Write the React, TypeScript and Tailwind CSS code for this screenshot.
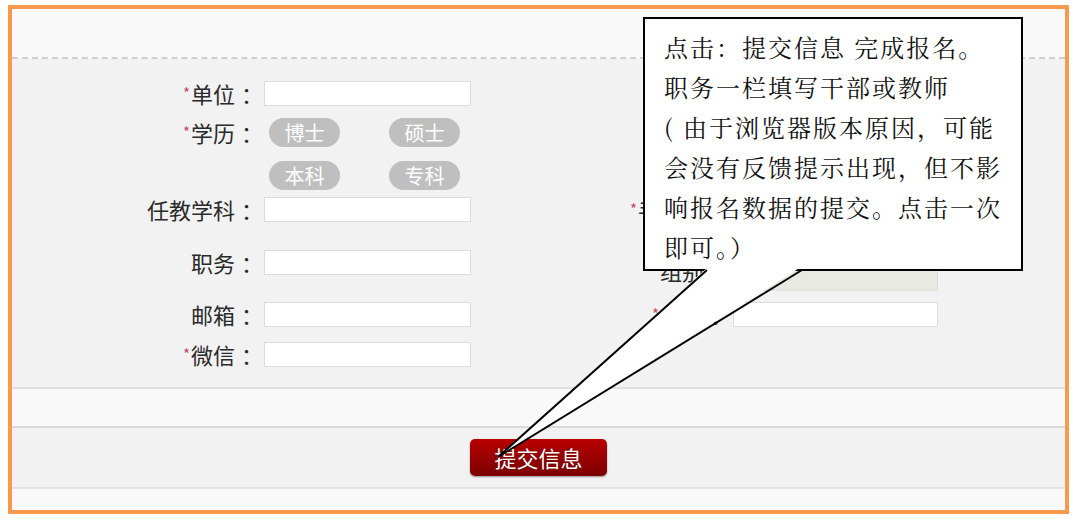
const font = { fontFamily: '"Microsoft YaHei", "Noto Sans CJK SC", sans-serif' };

type Row = {
  label?: string;
  required?: boolean;
  kind: "input" | "pills" | "gray" | "none";
  pills?: string[];
};

const Label = ({ label, required, width }: { label?: string; required?: boolean; width: string }) => (
  <div className={`${width} h-[25px] shrink-0 flex items-center justify-end text-[22px] leading-[25px] text-[#2a2a2a] whitespace-nowrap`}>
    {label && (
      <>
        {required && <span className="self-start mt-[4px] mr-[1px] text-[15px] leading-[15px] text-[#c24a6a]">*</span>}
        <span>{label}</span>
        <span className="ml-[6px] mr-[-7px]">：</span>
      </>
    )}
  </div>
);

const Field = ({ row, width }: { row: Row; width: string }) => {
  if (row.kind === "input") {
    return <div className={`${width} h-[25px] shrink-0 bg-white border border-[#dcdcdc]`} />;
  }
  if (row.kind === "gray") {
    return <div className={`${width} h-[41px] shrink-0 bg-[#e9e9e3] border border-[#e0e0da]`} />;
  }
  if (row.kind === "pills") {
    return (
      <div className={`${width} shrink-0 flex gap-[49px] pl-[5px]`}>
        {row.pills?.map((p) => (
          <div
            key={p}
            className="w-[71px] h-[29px] rounded-full bg-[#bfbfbf] text-white text-[20px] leading-[29px] text-center"
          >
            {p}
          </div>
        ))}
      </div>
    );
  }
  return <div className={`${width} shrink-0`} />;
};

// right column is mostly hidden under the callout
const rows: { mt: string; left: Row; right: Row }[] = [
  { mt: "mt-0", left: { label: "单位", required: true, kind: "input" }, right: { kind: "none" } },
  { mt: "mt-[12px]", left: { label: "学历", required: true, kind: "pills", pills: ["博士", "硕士"] }, right: { kind: "none" } },
  { mt: "mt-[14px]", left: { kind: "pills", pills: ["本科", "专科"] }, right: { kind: "none" } },
  { mt: "mt-[7px]", left: { label: "任教学科", kind: "input" }, right: { label: "手机号", required: true, kind: "input" } },
  { mt: "mt-[28px]", left: { label: "职务", kind: "input" }, right: { label: "组别", kind: "gray" } },
  { mt: "mt-[11px]", left: { label: "邮箱", kind: "input" }, right: { label: "电话", required: true, kind: "input" } },
  { mt: "mt-[15px]", left: { label: "微信", required: true, kind: "input" }, right: { kind: "none" } },
];

const calloutLines = [
  "点击：提交信息 完成报名。",
  "职务一栏填写干部或教师",
  "( 由于浏览器版本原因，可能",
  "会没有反馈提示出现，但不影",
  "响报名数据的提交。点击一次",
  "即可。）",
];

export default function App() {
  return (
    <div className="relative w-[1080px] h-[524px] bg-white overflow-hidden" style={font}>
      <div className="ml-[8px] mt-[5px] w-[1061px] h-[509px] border-4 border-[#f9994b] flex flex-col">
        <div className="h-[50px] shrink-0 bg-[#f9f9f9] border-b-2 border-dashed border-[#cfcfcf]" />
        <div className="h-[330px] shrink-0 bg-[#f2f2f2] border-b-2 border-[#e0e0e0] pt-[22px]">
          {rows.map((r, i) => (
            <div key={i} className={`flex items-start ${r.mt}`}>
              <div className="flex items-center">
                <Label label={r.left.label} required={r.left.required} width="w-[244px]" />
                <div className="w-[8px]" />
                <Field row={r.left} width="w-[207px]" />
              </div>
              <div className="flex items-center">
                <Label label={r.right.label} required={r.right.required} width="w-[254px]" />
                <div className="w-[8px]" />
                <Field row={r.right} width="w-[205px]" />
              </div>
            </div>
          ))}
        </div>
        <div className="h-[39px] shrink-0 bg-[#f9f9f9] border-b-2 border-[#dadada]" />
        <div className="h-[61px] shrink-0 bg-[#f2f2f2] border-b-2 border-[#e3e3e3] flex items-center justify-center">
          <button className="w-[137px] h-[37px] rounded-[5px] bg-gradient-to-b from-[#b80000] to-[#7c0000] text-white text-[22px] leading-[37px] shadow-[0_1px_2px_rgba(0,0,0,0.4)] [text-shadow:0_0_2px_rgba(80,0,0,0.8)]">
            提交信息
          </button>
        </div>
        <div className="flex-1 bg-[#f9f9f9]" />
      </div>

      {/* callout */}
      <div
        className="absolute left-[643px] top-[17px] w-[380px] h-[254px] bg-white border-2 border-black pl-[19px] pt-[8px] text-[24px] leading-[40px] tracking-[2px] text-[#111]"
        style={{ fontFamily: '"SimSun", "Noto Serif CJK SC", "Noto Sans CJK SC", serif' }}
      >
        {calloutLines.map((l) => (
          <div key={l} className="whitespace-pre">
            {l}
          </div>
        ))}
      </div>
      <svg className="absolute left-0 top-0 pointer-events-none" width="1080" height="524">
        <polygon points="708,267 801,267 498,457" fill="white" />
        <line x1="707" y1="270" x2="498" y2="457" stroke="black" strokeWidth="2" />
        <line x1="802" y1="270" x2="498" y2="457" stroke="black" strokeWidth="2" />
      </svg>
    </div>
  );
}
